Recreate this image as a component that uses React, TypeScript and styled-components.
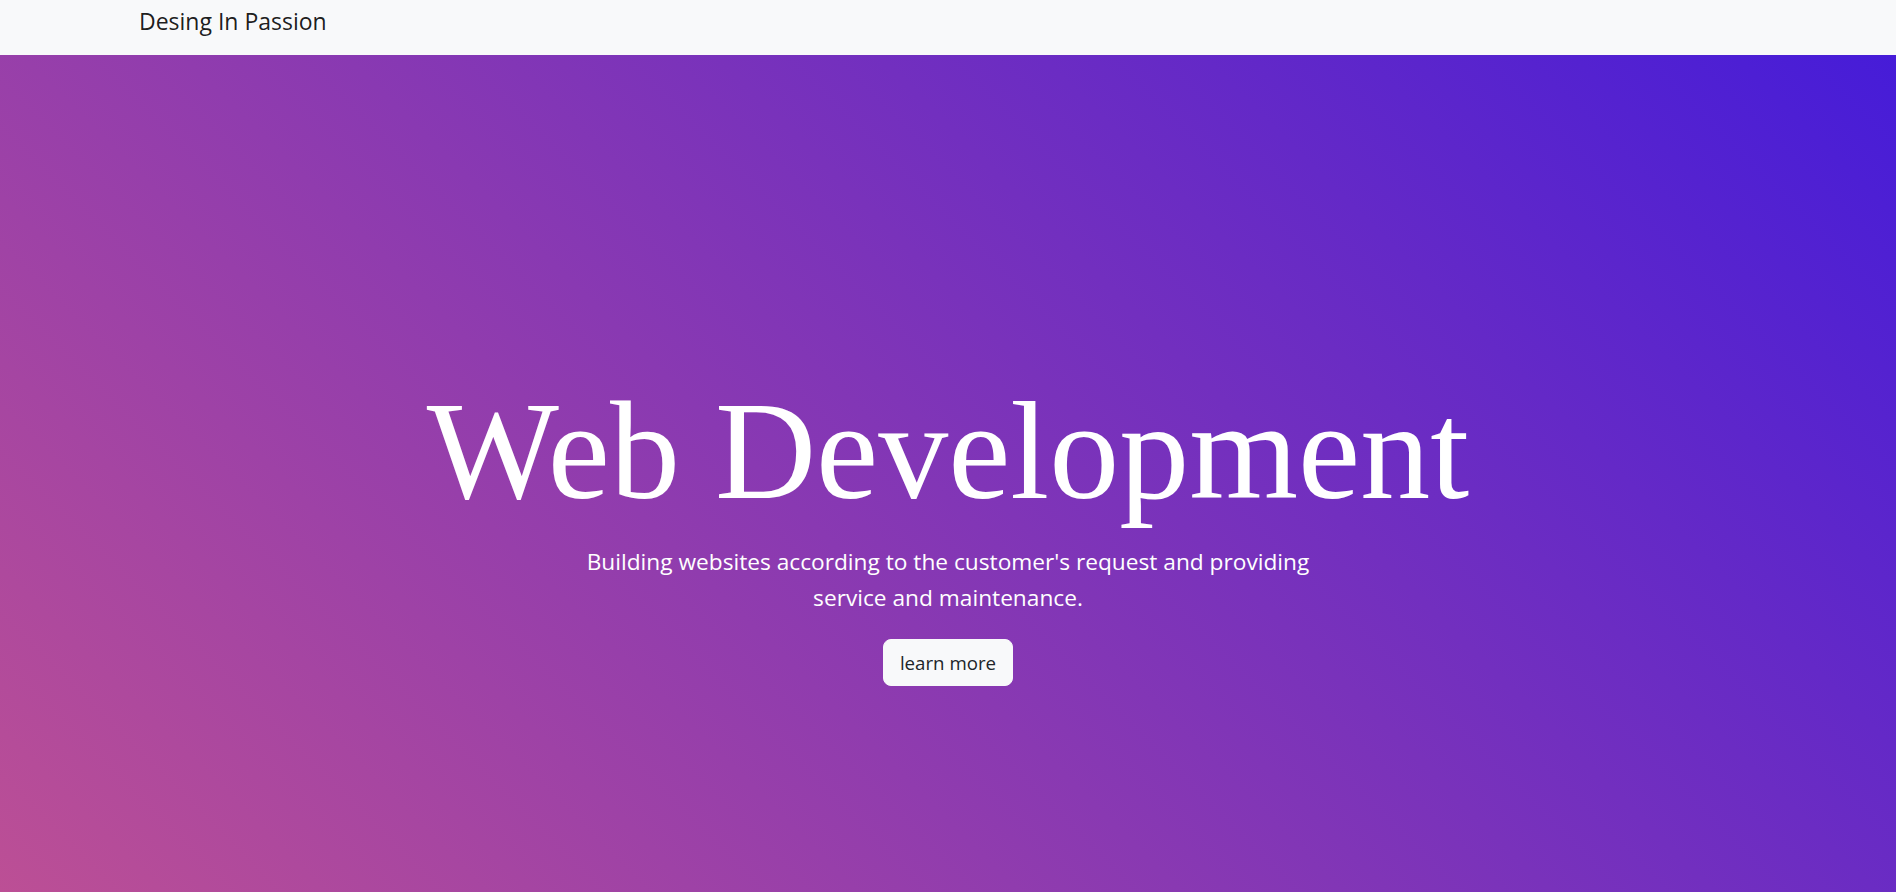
import React from "react";
import styled, { createGlobalStyle } from "styled-components";

const GlobalStyle = createGlobalStyle`
  html, body {
    margin: 0;
    padding: 0;
  }
  body {
    font-family: "Open Sans", "Noto Sans", sans-serif;
    color: #212529;
    background: #fff;
  }
  * { box-sizing: border-box; }
`;

const Navbar = styled.nav`
  height: 55px;
  background: #f8f9fa;
  display: flex;
  align-items: center;
  padding-left: 139px;
`;

const Brand = styled.a`
  font-family: "Open Sans", "Noto Sans", sans-serif;
  font-size: 23px;
  line-height: 30px;
  color: rgba(0, 0, 0, 0.9);
  text-decoration: none;
  margin-top: -14px;
`;

const Hero = styled.section`
  min-height: calc(100vh - 55px);
  background: linear-gradient(45deg, #bc4f95 0%, #461cd8 100%);
  display: flex;
  flex-direction: column;
  align-items: center;
  padding-top: 312px;
  text-align: center;
  color: #fff;
`;

const Title = styled.h1`
  font-family: "Liberation Serif", "Times New Roman", serif;
  font-weight: 400;
  font-size: 140px;
  line-height: 1.2;
  margin: 0 0 9px;
`;

const Lead = styled.p`
  font-family: "Open Sans", "Noto Sans", sans-serif;
  font-size: 22.7px;
  line-height: 36px;
  max-width: 770px;
  margin: 0 0 23px;
`;

const Button = styled.button`
  font-family: "Open Sans", "Noto Sans", sans-serif;
  font-size: 18.7px;
  line-height: 30px;
  height: 47px;
  padding: 7px 16px;
  background: #f8f9fa;
  color: #212529;
  border: 1px solid #f8f9fa;
  border-radius: 8px;
  cursor: pointer;
`;

export default function App() {
  return (
    <>
      <GlobalStyle />
      <Navbar>
        <Brand href="#">Desing In Passion</Brand>
      </Navbar>
      <Hero>
        <Title>Web Development</Title>
        <Lead>
          Building websites according to the customer's request and providing
          service and maintenance.
        </Lead>
        <Button>learn more</Button>
      </Hero>
    </>
  );
}
